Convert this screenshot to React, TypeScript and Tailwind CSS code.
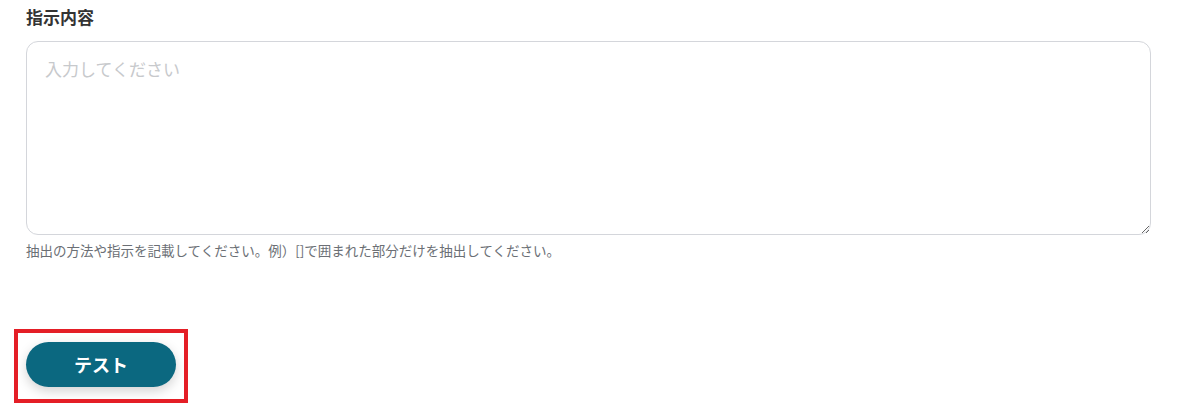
import React from "react";

export default function App() {
  const font = { fontFamily: '"Noto Sans CJK JP", "Noto Sans", sans-serif' };
  return (
    <div className="w-[1177px] h-[403px] bg-white overflow-hidden relative" style={font}>
      <div className="pl-[26px] pr-[26px] pt-[6px]">
        <div className="text-[17px] font-bold text-[#333333] leading-[22px]">指示内容</div>
        <textarea
          placeholder="入力してください"
          className="mt-[13px] block w-[1125px] h-[194px] border border-[#d4d6db] rounded-[12px] px-[18px] py-[14px] text-[17px] leading-[26px] text-[#333] placeholder:text-[#c7c9cc] outline-none resize-y"
          style={font}
        />
        <div className="mt-[6px] text-[13.5px] leading-[18px] text-[#6b6f75]">
          抽出の方法や指示を記載してください。例）[]で囲まれた部分だけを抽出してください。
        </div>
        <div className="mt-[83px]">
          <button className="w-[150px] h-[45px] rounded-full bg-[#0b6880] text-white text-[18px] font-bold shadow-[0_4px_12px_rgba(0,0,0,0.18)]">
            テスト
          </button>
        </div>
      </div>
      <div className="absolute left-[14px] top-[329px] w-[174px] h-[74px] border-4 border-[#e41e26]" />
    </div>
  );
}
